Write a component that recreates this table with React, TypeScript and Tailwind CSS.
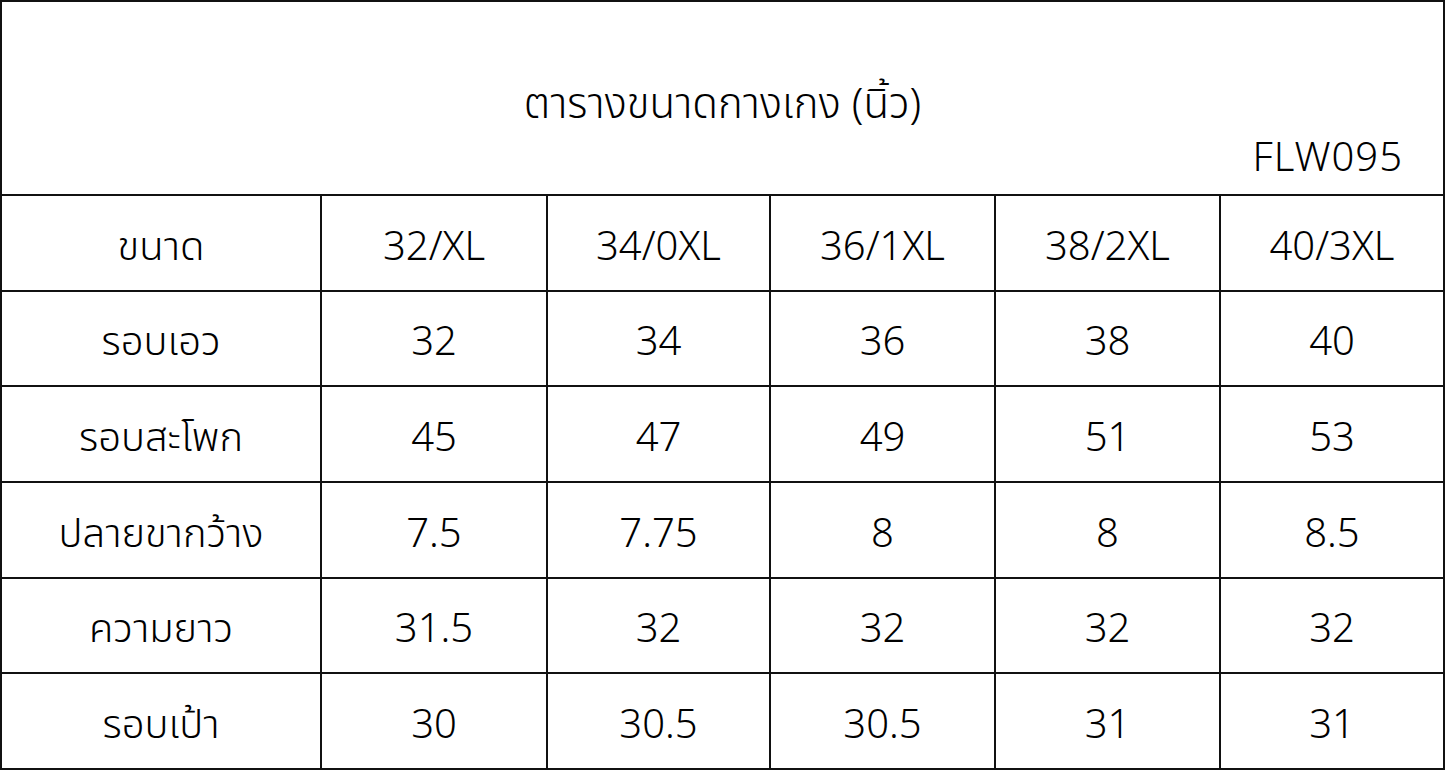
const header = ['ขนาด', '32/XL', '34/0XL', '36/1XL', '38/2XL', '40/3XL'];

const rows: string[][] = [
  ['รอบเอว', '32', '34', '36', '38', '40'],
  ['รอบสะโพก', '45', '47', '49', '51', '53'],
  ['ปลายขากว้าง', '7.5', '7.75', '8', '8', '8.5'],
  ['ความยาว', '31.5', '32', '32', '32', '32'],
  ['รอบเป้า', '30', '30.5', '30.5', '31', '31'],
];

export default function App() {
  const all = [header, ...rows];
  return (
    <div
      className="w-[1445px] h-[770px] bg-white text-black flex flex-col border-2 border-[#111] font-[350]"
      style={{ fontFamily: '"Noto Sans", "Noto Sans Thai", Loma, sans-serif' }}
    >
      {/* Title */}
      <div className="h-[192px] flex flex-col">
        <div className="pt-[73px] text-center text-[42px] leading-[54px]">ตารางขนาดกางเกง (นิ้ว)</div>
        <div className="pr-[40px] mt-[3px] text-right text-[40px] leading-[48px] tracking-[1px]">FLW095</div>
      </div>

      {/* Table */}
      <div className="flex-1 grid grid-cols-[318px_226px_223px_225px_225px_1fr] grid-rows-6">
        {all.map((row, r) =>
          row.map((cell, c) => (
            <div
              key={`${r}-${c}`}
              className={`flex items-center justify-center border-t-2 border-[#111] text-[40px] pt-[4px] ${
                c > 0 ? 'border-l-2' : ''
              }`}
            >
              {cell}
            </div>
          ))
        )}
      </div>
    </div>
  );
}
